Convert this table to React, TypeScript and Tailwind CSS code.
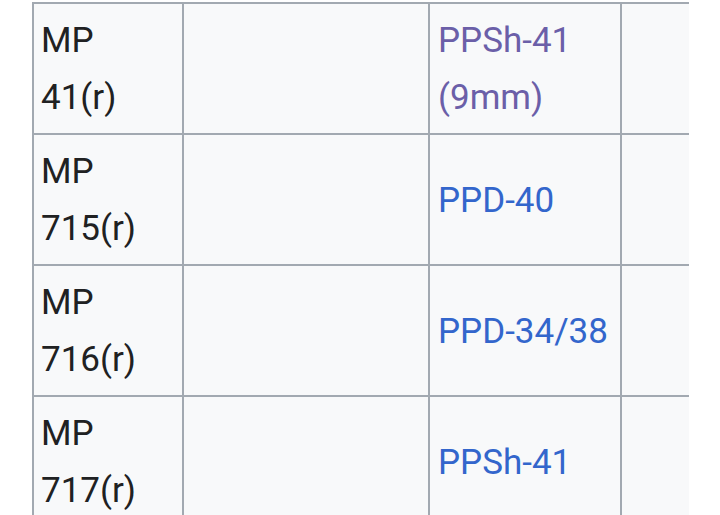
import React from "react";

const rows = [
  { a: ["MP", "41(r)"], link: ["PPSh-41", "(9mm)"], visited: true },
  { a: ["MP", "715(r)"], link: ["PPD-40"], visited: false },
  { a: ["MP", "716(r)"], link: ["PPD-34/38"], visited: false },
  { a: ["MP", "717(r)"], link: ["PPSh-41"], visited: false },
];

export default function App() {
  return (
    <div
      className="w-[720px] h-[515px] bg-white overflow-hidden"
      style={{ fontFamily: "Roboto, 'Noto Sans', sans-serif" }}
    >
      <div className="ml-[32px] mt-[2px] w-[657px] overflow-hidden">
        <table className="table-fixed border-separate border-spacing-0 bg-[#f8f9fa] w-[790px] text-[35px] leading-[57px] text-[#202122]">
          <colgroup>
            <col className="w-[152px]" />
            <col className="w-[246px]" />
            <col className="w-[192px]" />
            <col className="w-[200px]" />
          </colgroup>
          <tbody>
            {rows.map((r, i) => (
              <tr key={i}>
                <td
                  className={`border-l-2 border-r-2 border-b-2 border-[#a2a9b1] pl-[7px] pr-[6px] pt-[8px] pb-[7px] align-middle ${
                    i === 0 ? "border-t-2" : ""
                  }`}
                >
                  {r.a.map((t, j) => (
                    <div key={j}>{t}</div>
                  ))}
                </td>
                <td
                  className={`border-r-2 border-b-2 border-[#a2a9b1] px-[6px] ${
                    i === 0 ? "border-t-2" : ""
                  }`}
                ></td>
                <td
                  className={`border-r-2 border-b-2 border-[#a2a9b1] pl-[8px] pr-[6px] pt-[8px] pb-[7px] align-middle ${
                    i === 0 ? "border-t-2" : ""
                  }`}
                >
                  <a
                    href="#"
                    className={r.visited ? "text-[#6b5fa8]" : "text-[#3366cc]"}
                  >
                    {r.link.map((t, j) => (
                      <div key={j}>{t}</div>
                    ))}
                  </a>
                </td>
                <td
                  className={`border-r-2 border-b-2 border-[#a2a9b1] px-[6px] ${
                    i === 0 ? "border-t-2" : ""
                  }`}
                ></td>
              </tr>
            ))}
          </tbody>
        </table>
      </div>
    </div>
  );
}
